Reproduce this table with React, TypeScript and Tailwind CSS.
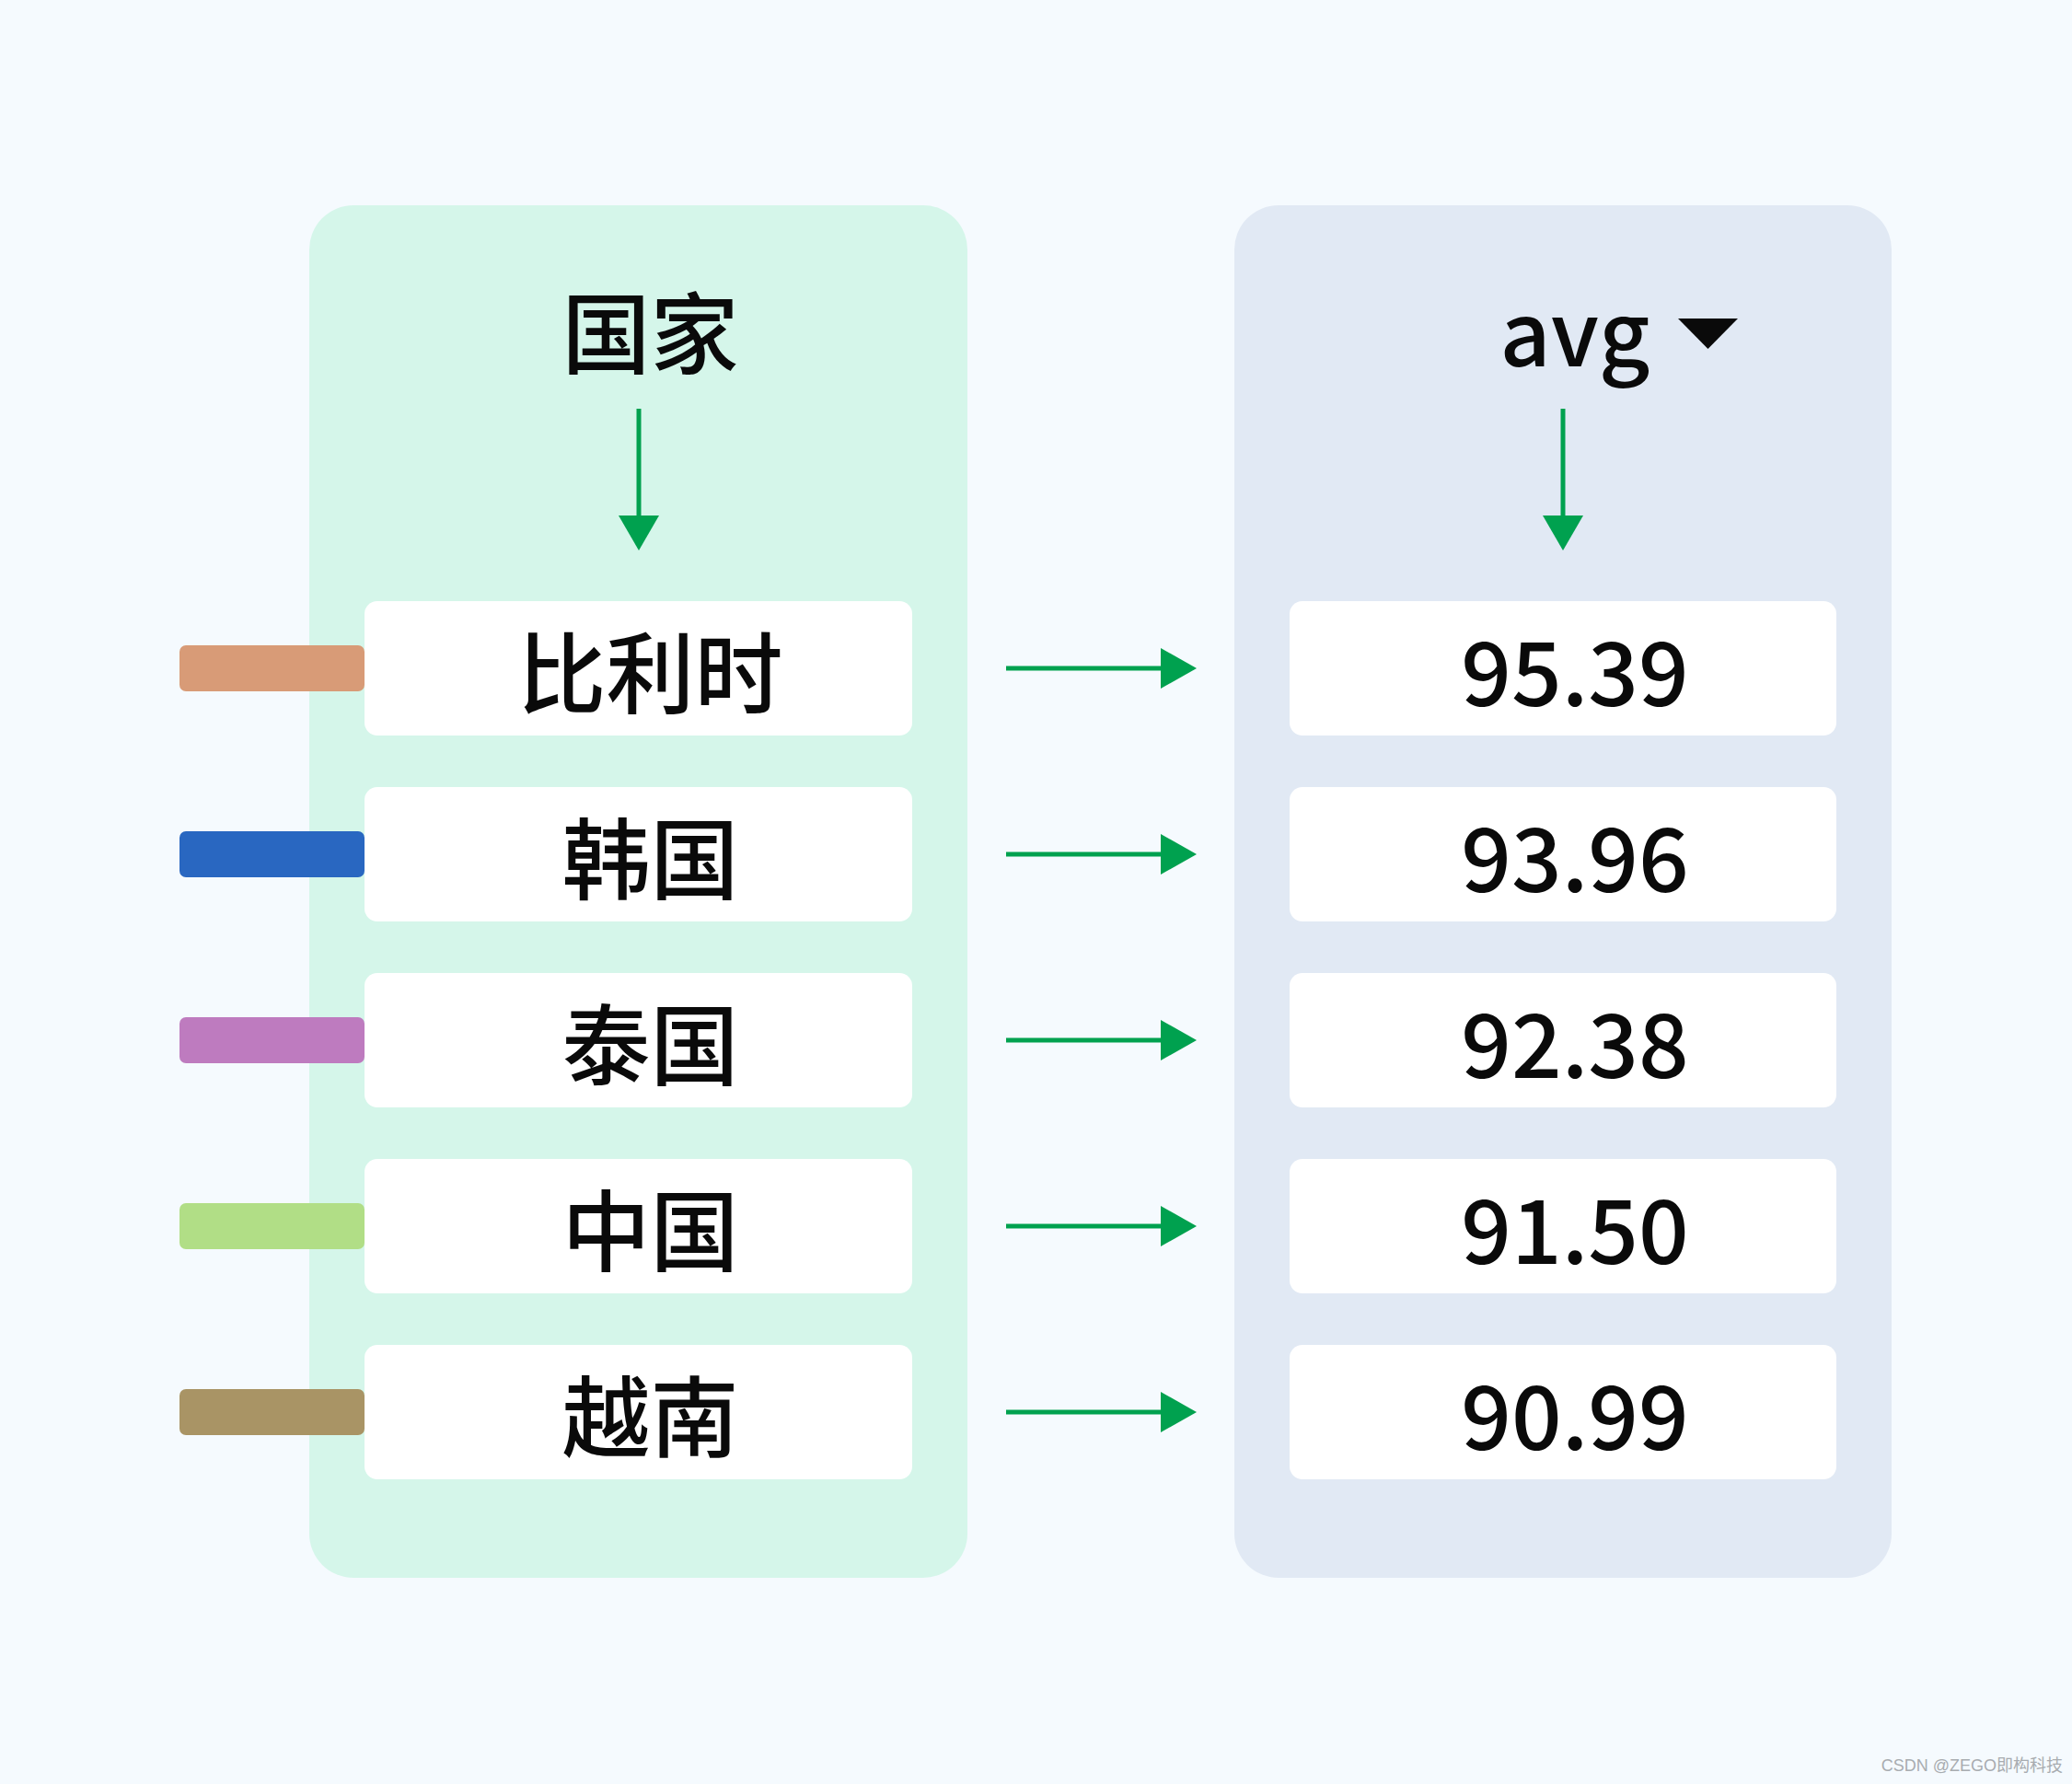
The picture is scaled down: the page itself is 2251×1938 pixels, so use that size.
const countries = [
  { name: "比利时", avg: "95.39", color: "bg-[#d89b77]" },
  { name: "韩国", avg: "93.96", color: "bg-[#2967c1]" },
  { name: "泰国", avg: "92.38", color: "bg-[#be7bbf]" },
  { name: "中国", avg: "91.50", color: "bg-[#b1de86]" },
  { name: "越南", avg: "90.99", color: "bg-[#a99465]" },
];

function DownArrow() {
  return (
    <svg width="44" height="154" viewBox="0 0 44 154" className="mt-[39px]">
      <rect x="19.5" y="0" width="5" height="118" fill="#00a14f" />
      <polygon points="0,116 44,116 22,154" fill="#00a14f" />
    </svg>
  );
}

function RightArrow() {
  return (
    <svg width="207" height="44" viewBox="0 0 207 44">
      <rect x="0" y="19.5" width="170" height="5" fill="#00a14f" />
      <polygon points="168,0 207,22 168,44" fill="#00a14f" />
    </svg>
  );
}

function Cell({ children }: { children: React.ReactNode }) {
  return (
    <div className="flex h-[146px] flex-1 items-center justify-center rounded-[14px] bg-white pl-[26px] text-[96px] font-medium leading-[96px] text-[#0a0a0a]">
      {children}
    </div>
  );
}

export default function App() {
  return (
    <div className="relative h-[1938px] w-[2251px] bg-[#f5fafe] font-['Noto_Sans_CJK_SC','Noto_Sans',sans-serif]">
      <div className="flex pl-[336px] pt-[223px]">
        {/* 国家 */}
        <div className="flex h-[1491px] w-[715px] flex-col rounded-[48px] bg-[#d5f6ea] px-[60px]">
          <div className="flex h-[430px] flex-col items-center pt-[86px]">
            <div className="pl-[26px] text-[96px] font-medium leading-[96px] text-[#0a0a0a]">国家</div>
            <DownArrow />
          </div>
          <div className="flex flex-col gap-[56px]">
            {countries.map((c) => (
              <div key={c.name} className="flex items-center">
                <div className={`-ml-[201px] h-[50px] w-[201px] shrink-0 rounded-[7px] ${c.color}`} />
                <Cell>{c.name}</Cell>
              </div>
            ))}
          </div>
        </div>

        <div className="flex w-[290px] flex-col gap-[56px] pt-[430px]">
          {countries.map((c) => (
            <div key={c.name} className="flex h-[146px] items-center justify-center">
              <RightArrow />
            </div>
          ))}
        </div>

        {/* avg */}
        <div className="flex h-[1491px] w-[714px] flex-col rounded-[48px] bg-[#e1e9f4] px-[60px]">
          <div className="flex h-[430px] flex-col items-center pt-[86px]">
            <div className="relative pl-[26px] text-[96px] font-medium leading-[96px] text-[#0a0a0a]">
              avg
              <svg
                width="65"
                height="33"
                viewBox="0 0 65 33"
                className="absolute left-full top-[37px] ml-[30px]"
              >
                <polygon points="0,0 65,0 32.5,33" fill="#0a0a0a" />
              </svg>
            </div>
            <DownArrow />
          </div>
          <div className="flex flex-col gap-[56px]">
            {countries.map((c) => (
              <div key={c.name} className="flex">
                <Cell>{c.avg}</Cell>
              </div>
            ))}
          </div>
        </div>
      </div>

      <div className="absolute bottom-[6px] right-[10px] text-[18px] text-[#a8acb0] font-['Liberation_Sans','Noto_Sans_CJK_SC',sans-serif]">
        CSDN @ZEGO即构科技
      </div>
    </div>
  );
}
